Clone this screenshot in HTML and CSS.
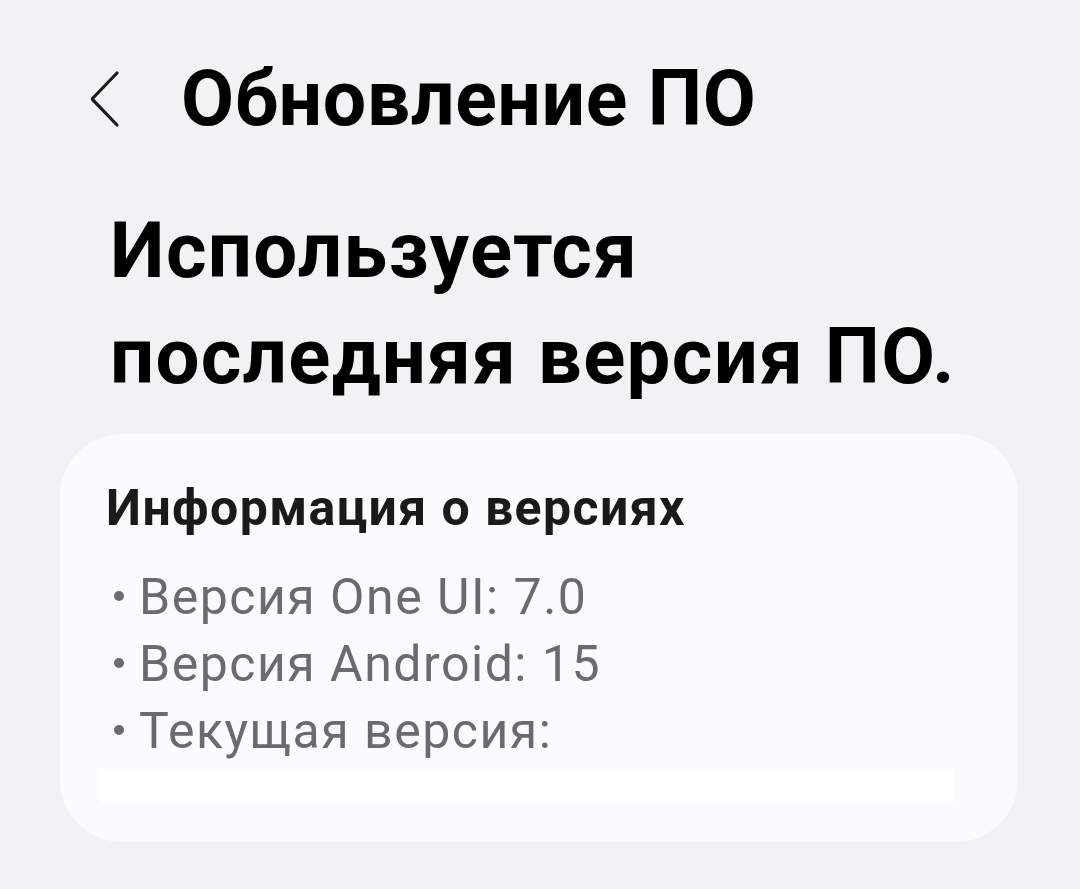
FILE: index.html
```html
<!DOCTYPE html>
<html lang="ru">
<head>
    <meta charset="UTF-8">
    <meta name="viewport" content="width=device-width, initial-scale=1.0">
    <title>Обновление ПО</title>
    <link rel="stylesheet" href="styles.css">
</head>
<body>
    <div class="topbar">
        <span class="back">
            <svg width="32" height="58" viewBox="0 0 32 58">
                <path d="M28 3 L4 28 Q3 29 4 30 L28 55" fill="none" stroke="#1c1c1c" stroke-width="3.2" stroke-linecap="round" stroke-linejoin="round"/>
            </svg>
        </span>
        <h1 class="title">Обновление ПО</h1>
    </div>

    <h2 class="status">Используется<br>последняя версия ПО.</h2>

    <div class="card">
        <div class="card-head">Информация о версиях</div>
        <ul class="info">
            <li>Версия One UI: 7.0</li>
            <li>Версия Android: 15</li>
            <li>Текущая версия:</li>
        </ul>
        <div class="hidden-line"></div>
    </div>
</body>
</html>
```

FILE: styles.css
```css
*{
    padding: 0;
    margin: 0;
    box-sizing: border-box;
}
body{
    background: #f2f2f4;
    font-family: Roboto, "Noto Sans", "Liberation Sans", sans-serif;
    color: #000;
    width: 1080px;
    height: 889px;
    overflow: hidden;
}

.topbar{
    display: flex;
    align-items: center;
    height: 90px;
    margin-top: 54px;
    padding-left: 89px;
}
.back{
    display: flex;
    width: 32px;
}
.title{
    margin-left: 60px;
    font-size: 77px;
    font-weight: 700;
    letter-spacing: 0.6px;
    line-height: 90px;
}

.status{
    margin: 54px 0 0 110px;
    font-size: 78px;
    font-weight: 700;
    line-height: 106px;
    letter-spacing: 1.3px;
}

.card{
    margin: 24px 62px 0 60px;
    background: #fbfbfd;
    border-radius: 62px;
    padding: 44px 46px 39px 46px;
}
.card-head{
    font-size: 50px;
    font-weight: 700;
    line-height: 60px;
    color: #1a1a1a;
    letter-spacing: 1.4px;
}
.info{
    list-style: none;
    margin-top: 26px;
}
.info li{
    display: flex;
    align-items: center;
    font-size: 50px;
    line-height: 67px;
    color: #6a6a70;
    letter-spacing: 1.5px;
}
.info li::before{
    content: "";
    width: 10px;
    height: 10px;
    border-radius: 50%;
    background: #6a6a70;
    margin: -4px 15px 0 8px;
    flex-shrink: 0;
}
.hidden-line{
    margin: 4px 0 0 -6px;
    width: 853px;
    height: 34px;
    background: #ffffff;
}
```
